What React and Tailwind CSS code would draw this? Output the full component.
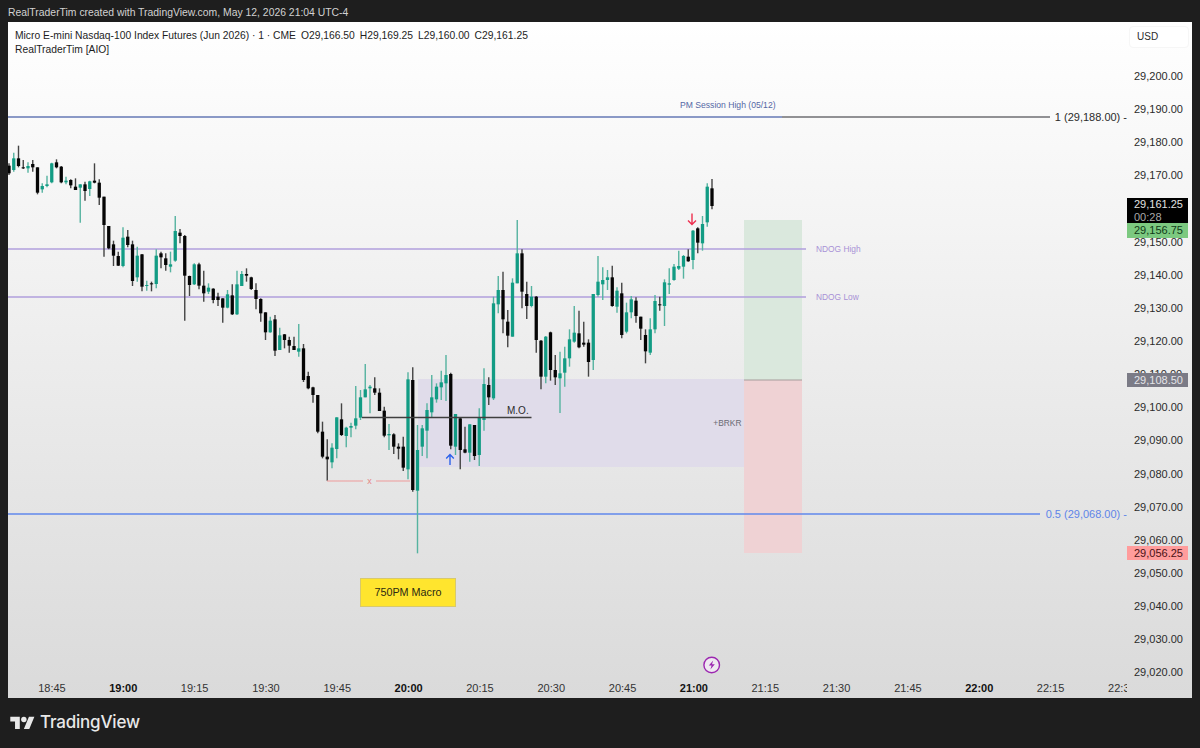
const GREEN = "#129c84";

// rows are [green, wickTop, bodyTop, bodyBottom, wickBottom], read off the chart in 3x px from a y origin
const part1 = [
  [0, 40, 47, 70, 75], [1, 8, 25, 60, 65], [0, -13, 25, 48, 52], [0, 30, 52, 55, 57], [1, 37, 48, 55, 68],
  [0, 30, 42, 52, 65], [0, 52, 52, 128, 133], [1, 100, 108, 118, 128], [1, 77, 103, 108, 112], [1, 38, 40, 97, 100],
  [0, 28, 37, 52, 55], [0, 48, 50, 97, 100], [1, 80, 92, 97, 103], [0, 88, 90, 106, 115], [0, 85, 110, 120, 120],
  [1, 103, 103, 113, 218], [0, 95, 103, 123, 152], [1, 92, 94, 117, 138], [0, 40, 92, 98, 100], [0, 88, 98, 143, 165],
  [0, 140, 140, 225, 320], [0, 228, 228, 295, 298], [0, 272, 283, 317, 348], [0, 305, 318, 347, 348], [1, 232, 263, 348, 352],
  [0, 240, 260, 285, 292], [0, 272, 283, 393, 408], [1, 290, 317, 382, 395], [0, 312, 313, 410, 424], [1, 392, 405, 408, 422],
  [0, 395, 400, 403, 424], [1, 298, 317, 402, 415], [0, 305, 310, 322, 355], [0, 310, 325, 345, 362], [1, 305, 343, 350, 367],
  [1, 198, 243, 332, 335], [0, 237, 248, 258, 280], [0, 255, 258, 377, 512], [0, 377, 378, 405, 438], [1, 340, 343, 403, 405],
  [0, 338, 343, 407, 418], [0, 362, 407, 430, 455], [1, 400, 413, 425, 432], [0, 415, 416, 450, 460], [0, 428, 440, 450, 468],
  [0, 445, 445, 473, 518], [1, 420, 433, 473, 475], [0, 403, 436, 493, 495], [1, 362, 403, 493, 495], [1, 363, 372, 408, 408],
  [0, 355, 372, 377, 395], [0, 380, 382, 417, 420], [0, 400, 420, 447, 478], [0, 445, 447, 490, 515], [0, 487, 487, 547, 570],
  [1, 500, 512, 547, 548],
];
const part2 = [
  [0, 255, 268, 362, 378], [1, 293, 316, 360, 360], [0, 312, 313, 330, 355], [0, 320, 330, 347, 368], [0, 320, 348, 360, 360],
  [1, 282, 355, 365, 380], [0, 342, 355, 450, 456],
];
const part3 = [
  [0, 95, 108, 145, 148], [0, 140, 142, 165, 188], [0, 165, 165, 275, 280], [0, 245, 275, 350, 355], [0, 298, 350, 358, 422],
  [1, 310, 323, 367, 385], [1, 232, 232, 327, 355], [0, 190, 238, 285, 288], [1, 260, 263, 288, 322], [1, 248, 258, 263, 292],
  [1, 138, 235, 257, 268], [1, 150, 172, 233, 240], [1, 72, 148, 172, 172], [1, 135, 140, 145, 220], [0, 112, 145, 158, 165],
  [0, 145, 158, 213, 213], [0, 200, 212, 287, 292], [1, 252, 282, 286, 330], [0, 280, 283, 320, 342], [0, 310, 320, 326, 358],
  [0, 290, 320, 383, 393], [1, 97, 118, 388, 418], [0, 82, 120, 450, 455], [1, 255, 330, 452, 640], [1, 255, 265, 320, 348],
  [1, 190, 210, 272, 355], [1, 105, 172, 217, 232], [1, 130, 140, 178, 188], [1, 92, 127, 142, 180], [1, 45, 105, 130, 183],
  [0, 98, 102, 317, 328], [1, 222, 222, 320, 345], [0, 232, 235, 330, 388], [0, 260, 328, 338, 340], [1, 253, 253, 338, 365],
  [0, 255, 255, 348, 360], [1, 205, 232, 345, 378], [1, 85, 132, 240, 272], [0, 112, 135, 172, 195],
];
const part4 = [
  [1, 380, 400, 685, 690], [1, 318, 360, 403, 430], [0, 305, 360, 448, 490], [0, 420, 455, 497, 532], [1, 325, 338, 500, 500],
  [1, 150, 250, 340, 340], [0, 238, 250, 365, 415], [0, 335, 372, 408, 447], [1, 348, 380, 408, 412], [0, 378, 380, 510, 548],
  [0, 510, 512, 620, 658], [1, 498, 500, 620, 640], [0, 485, 487, 600, 632], [0, 555, 600, 622, 645], [1, 545, 610, 625, 729],
  [1, 530, 565, 608, 650], [1, 478, 508, 565, 590], [1, 408, 488, 515, 518], [0, 422, 490, 532, 535], [0, 455, 518, 524, 530],
  [0, 508, 518, 576, 620], [1, 372, 372, 570, 600], [1, 258, 335, 375, 380], [1, 292, 330, 343, 390], [1, 300, 322, 330, 360],
  [0, 287, 322, 408, 410], [1, 352, 362, 410, 428], [0, 338, 370, 495, 505], [1, 398, 427, 485, 490], [1, 378, 388, 427, 445],
  [0, 382, 392, 438, 458], [0, 440, 440, 476, 510], [0, 478, 495, 544, 580], [1, 445, 478, 548, 555], [1, 375, 393, 478, 490],
  [0, 380, 403, 406, 422], [1, 328, 337, 408, 468], [1, 295, 340, 344, 372], [1, 282, 290, 330, 332], [1, 242, 288, 296, 300],
  [1, 255, 258, 290, 326], [0, 238, 260, 274, 275], [1, 180, 182, 270, 298], [0, 172, 175, 218, 250], [1, 138, 162, 220, 242],
  [1, 40, 50, 157, 170], [0, 27, 55, 108, 118],
];

const toPage = (rows, y0) => rows.map(([g, a, b, c, d]) => [g, y0 + a / 3, y0 + b / 3, y0 + c / 3, y0 + d / 3]);
const candles = [
  ...toPage(part1, 150),
  ...toPage(part2, 230),
  ...toPage(part3, 340),
  ...toPage(part4, 170),
];

// 29,160.00 sits fully under the last-price tag in the picture, so its slot stays empty
const prices = [
  "29,200.00", "29,190.00", "29,180.00", "29,170.00", "", "29,150.00", "29,140.00", "29,130.00", "29,120.00", "29,110.00",
  "29,100.00", "29,090.00", "29,080.00", "29,070.00", "29,060.00", "29,050.00", "29,040.00", "29,030.00", "29,020.00",
];

const times = [
  ["18:45"], ["19:00", true], ["19:15"], ["19:30"], ["19:45"], ["20:00", true], ["20:15"], ["20:30"], ["20:45"], ["21:00", true],
  ["21:15"], ["21:30"], ["21:45"], ["22:00", true], ["22:15"], ["22:30"],
];

function Chart() {
  return (
    <svg className="block w-[1119px] h-[656px]" viewBox="8 22 1119 656">
      <rect x="418" y="379" width="326" height="88" fill="#e0dcea" />
      <rect x="744" y="220" width="58" height="160" fill="#dae8dd" />
      <rect x="744" y="380" width="58" height="173" fill="#efd2d4" />
      <line x1="744" x2="802" y1="380" y2="380" stroke="#a59c9c" strokeWidth="1.2" />

      <line x1="8" x2="782" y1="117" y2="117" stroke="#6478b4" strokeWidth="1.5" />
      <line x1="782" x2="1050" y1="117" y2="117" stroke="#6e6e72" strokeWidth="1.5" />
      <line x1="8" x2="806" y1="249" y2="249" stroke="#b19fdc" strokeWidth="1.5" />
      <line x1="8" x2="806" y1="297" y2="297" stroke="#b19fdc" strokeWidth="1.5" />
      <line x1="8" x2="1040" y1="514" y2="514" stroke="#6088ec" strokeWidth="1.5" />

      {candles.map(([green, wickTop, bodyTop, bodyBottom, wickBottom], i) => {
        const x = 9 + i * 4.75;
        return (
          <g key={i}>
            <line
              x1={x}
              x2={x}
              y1={wickTop}
              y2={wickBottom}
              stroke={green ? "#55b3a0" : "#444444"}
              strokeWidth="1.4"
            />
            <rect
              x={x - 1.65}
              y={bodyTop}
              width="3.3"
              height={bodyBottom - bodyTop}
              fill={green ? GREEN : "#050505"}
            />
          </g>
        );
      })}

      <line x1="362" x2="531.5" y1="417.5" y2="417.5" stroke="#3f3f3f" strokeWidth="1.3" />
      <line x1="327" x2="363" y1="481" y2="481" stroke="#ee9a9a" strokeWidth="1.2" />
      <line x1="376" x2="410" y1="481" y2="481" stroke="#ee9a9a" strokeWidth="1.2" />
      <text x="369.5" y="484" textAnchor="middle" fontSize="9" fill="#e58787">x</text>
      <text x="507" y="414" fontSize="10" fill="#2a2a2a">M.O.</text>
      <text x="680" y="108" fontSize="8.6" fill="#5568a5">PM Session High (05/12)</text>
      <text x="816" y="252" fontSize="8.4" fill="#a891d6">NDOG High</text>
      <text x="816" y="300" fontSize="8.4" fill="#a891d6">NDOG Low</text>
      <text x="741.5" y="426" textAnchor="end" fontSize="8.4" fill="#6b6b74">+BRKR</text>
      <text x="1127" y="121" textAnchor="end" fontSize="11" fill="#2a2a2a">1 (29,188.00) -</text>
      <text x="1127" y="517.5" textAnchor="end" fontSize="11" fill="#5f85e8">0.5 (29,068.00) -</text>

      {/* trade arrows */}
      <path d="M450 465V454.5M446.2 458.5L450 454.5L453.8 458.5" fill="none" stroke="#2c62ea" strokeWidth="1.4" />
      <path d="M692 213.5V224.5M688 220.5L692 224.5L696 220.5" fill="none" stroke="#ee2f4f" strokeWidth="1.4" />

      {/* session break marker */}
      <circle cx="711.7" cy="665" r="7.8" fill="#efe8f1" stroke="#9c27b0" strokeWidth="1.4" />
      <path d="M713.2 660.5L708.8 665.6H711.6L710.4 669.5L714.8 664.3H712Z" fill="#9c27b0" />
    </svg>
  );
}

function PriceAxis() {
  return (
    <div className="relative w-[65px] h-[656px] pt-[44px] text-[11px] text-[#2b2b2b]">
      <div className="absolute left-[2px] top-[4px] w-[60px] h-[22px] pl-[7px] rounded-sm border border-[#f6f6f6] bg-white text-[10px] leading-[20px]">
        USD
      </div>
      {prices.map((p, i) => (
        <div key={i} className="h-[33.14px] pl-[7px] leading-[20px]">
          {p}
        </div>
      ))}
      <div className="absolute left-0 top-[176px] w-[61px] h-[25px] pl-[7px] bg-black text-[#e2e2e2] leading-[12.5px]">
        29,161.25
        <div className="text-[#a8a8a8]">00:28</div>
      </div>
      <div className="absolute left-0 top-[201px] w-[61px] h-[15px] pl-[7px] bg-[#7cc980] text-[#0f3a17] leading-[15px]">
        29,156.75
      </div>
      <div className="absolute left-0 top-[351px] w-[61px] h-[14px] pl-[7px] bg-[#7b7b86] text-[#e4e4e8] leading-[14px]">
        29,108.50
      </div>
      <div className="absolute left-0 top-[524px] w-[61px] h-[14px] pl-[7px] bg-[#ff9c9c] text-[#4a1014] leading-[14px]">
        29,056.25
      </div>
    </div>
  );
}

export default function App() {
  return (
    <div className="flex flex-col w-[1200px] h-[748px] overflow-hidden bg-[#1e1e1e] font-['Liberation_Sans',sans-serif]">
      <div className="h-[22px] pl-2 text-[10.4px] leading-[26px] text-[#d2d2d2]">
        RealTraderTim created with TradingView.com, May 12, 2026 21:04 UTC-4
      </div>

      <div className="relative mx-2 h-[676px] overflow-hidden bg-linear-to-b from-white to-[#dadada]">
        <div className="flex h-[656px]">
          <Chart />
          <PriceAxis />
        </div>

        <div className="absolute left-[7px] top-[7px] text-[10.3px] leading-[14px] text-[#1d1d1d]">
          <div className="flex gap-[5px]">
            <span>Micro E-mini Nasdaq-100 Index Futures (Jun 2026) · 1 · CME</span>
            <span>O29,166.50</span>
            <span>H29,169.25</span>
            <span>L29,160.00</span>
            <span>C29,161.25</span>
          </div>
          <div>RealTraderTim [AIO]</div>
        </div>

        <div className="absolute left-[352px] top-[556px] flex w-[96px] h-[29px] items-center justify-center border border-[#d8c96c] bg-[#ffe52e] text-[10.8px] text-[#2c2a12]">
          750PM Macro
        </div>

        <div className="flex w-[1119px] h-[20px] overflow-hidden pl-[8.3px] text-[11px] leading-[20px] text-[#333]">
          {times.map(([t, bold]) => (
            <div key={t} className={"w-[71.33px] shrink-0 text-center " + (bold ? "font-bold text-[#111]" : "")}>
              {t}
            </div>
          ))}
        </div>
      </div>

      <div className="flex flex-1 items-center gap-[5px] pl-[10px]">
        <svg className="w-[25px] h-[19px]" viewBox="0 0 36 28" fill="#e8e8e8">
          <path d="M14 22H7V11H0V4h14v18zM28 22h-8l7.5-18h8L28 22z" />
          <circle cx="20" cy="8" r="4" />
        </svg>
        <span className="font-['Inter',sans-serif] text-[17px] font-medium text-[#e8e8e8] tracking-[-0.2px]">TradingView</span>
      </div>
    </div>
  );
}
